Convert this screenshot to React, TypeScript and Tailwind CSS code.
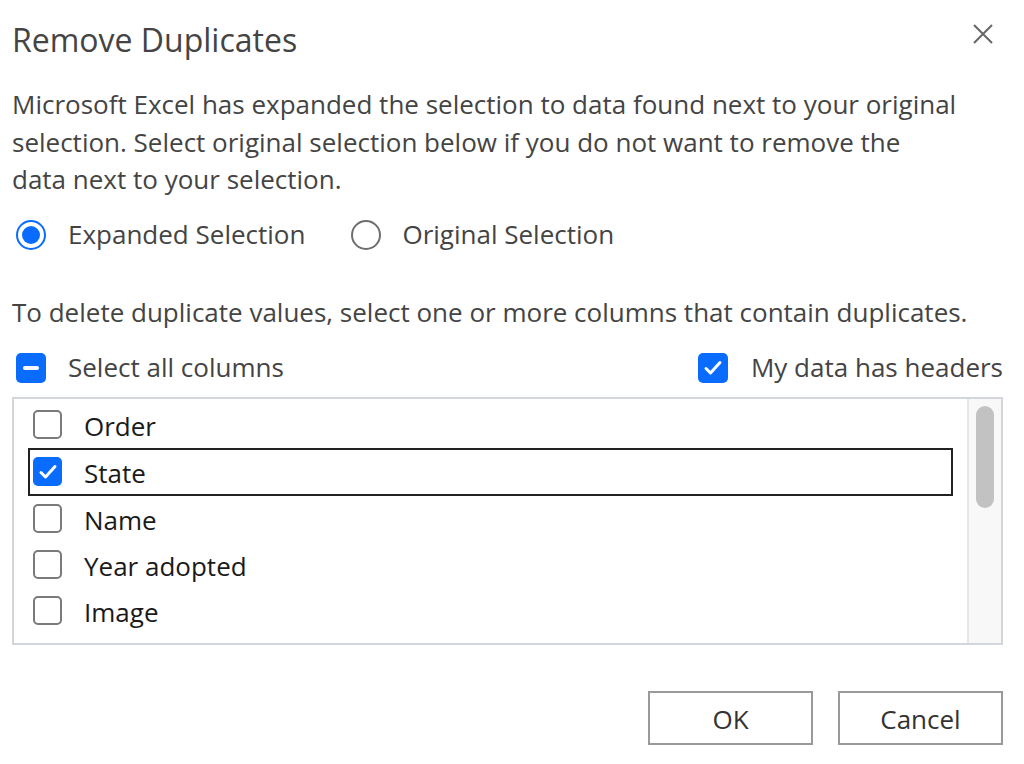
import React from "react";

const font = { fontFamily: '"Open Sans", "Noto Sans", sans-serif' };

function Tick() {
  return (
    <svg width="22" height="22" viewBox="0 0 22 22" fill="none">
      <path d="M4 11.5l4.5 4.5 9.5-10.5" stroke="white" strokeWidth="3" strokeLinecap="round" strokeLinejoin="round" />
    </svg>
  );
}

function Check({ checked }: { checked?: boolean }) {
  if (checked) {
    return (
      <span className="flex h-[29px] w-[29px] shrink-0 items-center justify-center rounded-[5px] bg-[#0a6cff]">
        <Tick />
      </span>
    );
  }
  return <span className="h-[29px] w-[29px] shrink-0 rounded-[5px] border-2 border-[#7a7a7a] bg-white" />;
}

const columns = ["Order", "State", "Name", "Year adopted", "Image"];

export default function App() {
  return (
    <div className="h-[764px] w-[1024px] bg-white text-[#444]" style={font}>
      <div className="flex h-[62px] items-end justify-between pl-[12px] pr-[30px]">
        <h1 className="text-[32px] leading-[44px] text-[#444]">Remove Duplicates</h1>
        <svg width="22" height="22" viewBox="0 0 22 22" className="mb-[17px]">
          <path d="M2 2l18 18M20 2L2 20" stroke="#666" strokeWidth="2" />
        </svg>
      </div>

      <p className="mt-[24px] pl-[12px] text-[26px] leading-[37.5px]">
        Microsoft Excel has expanded the selection to data found next to your original
        <br />
        selection. Select original selection below if you do not want to remove the
        <br />
        data next to your selection.
      </p>

      <div className="mt-[16px] flex h-[40px] items-center pl-[16px] text-[26px]">
        <span className="flex h-[30px] w-[30px] items-center justify-center rounded-full border-2 border-[#0a6cff]">
          <span className="h-[18px] w-[18px] rounded-full bg-[#0a6cff]" />
        </span>
        <span className="ml-[22px]">Expanded Selection</span>
        <span className="ml-[46px] h-[30px] w-[30px] rounded-full border-2 border-[#6e6e6e]" />
        <span className="ml-[21px]">Original Selection</span>
      </div>

      <div className="mt-[40px] flex h-[36px] items-center pl-[12px] text-[26px]">
        To delete duplicate values, select one or more columns that contain duplicates.
      </div>

      <div className="mt-[19px] flex h-[36px] items-center justify-between pl-[16px] pr-[21px] text-[26px]">
        <div className="flex items-center">
          <span className="flex h-[30px] w-[30px] items-center justify-center rounded-[5px] bg-[#0a6cff]">
            <span className="h-[4px] w-[16px] rounded-sm bg-white" />
          </span>
          <span className="ml-[22px]">Select all columns</span>
        </div>
        <div className="flex items-center">
          <span className="flex h-[30px] w-[30px] items-center justify-center rounded-[5px] bg-[#0a6cff]">
            <Tick />
          </span>
          <span className="ml-[23px]">My data has headers</span>
        </div>
      </div>

      <div className="mx-[12px] mt-[11px] mr-[21px] flex h-[248px] border-2 border-[#d3d6da]">
        <div className="flex-1 pt-[3px] pl-[14px] pr-[14px]">
          {columns.map((c) => (
            <div
              key={c}
              className={
                "flex items-center border-2 pl-[3px] text-[26px] text-[#1a1a1a] " +
                (c === "State" ? "h-[48px] border-[#222]" : "h-[46px] border-transparent")
              }
            >
              <Check checked={c === "State"} />
              <span className="ml-[22px] mt-[3px]">{c}</span>
            </div>
          ))}
        </div>
        <div className="w-[34px] border-l-2 border-[#e4e6e8] bg-[#f8f8f8] pt-[7px] pl-[7px]">
          <div className="h-[102px] w-[18px] rounded-full bg-[#c2c2c2]" />
        </div>
      </div>

      <div className="mt-[46px] flex justify-end gap-[25px] pr-[21px]">
        <button className="h-[54px] w-[165px] border-2 border-[#9a9a9a] bg-white pt-[4px] text-[26px] text-[#333]">OK</button>
        <button className="h-[54px] w-[165px] border-2 border-[#9a9a9a] bg-white pt-[4px] text-[26px] text-[#333]">Cancel</button>
      </div>
    </div>
  );
}
